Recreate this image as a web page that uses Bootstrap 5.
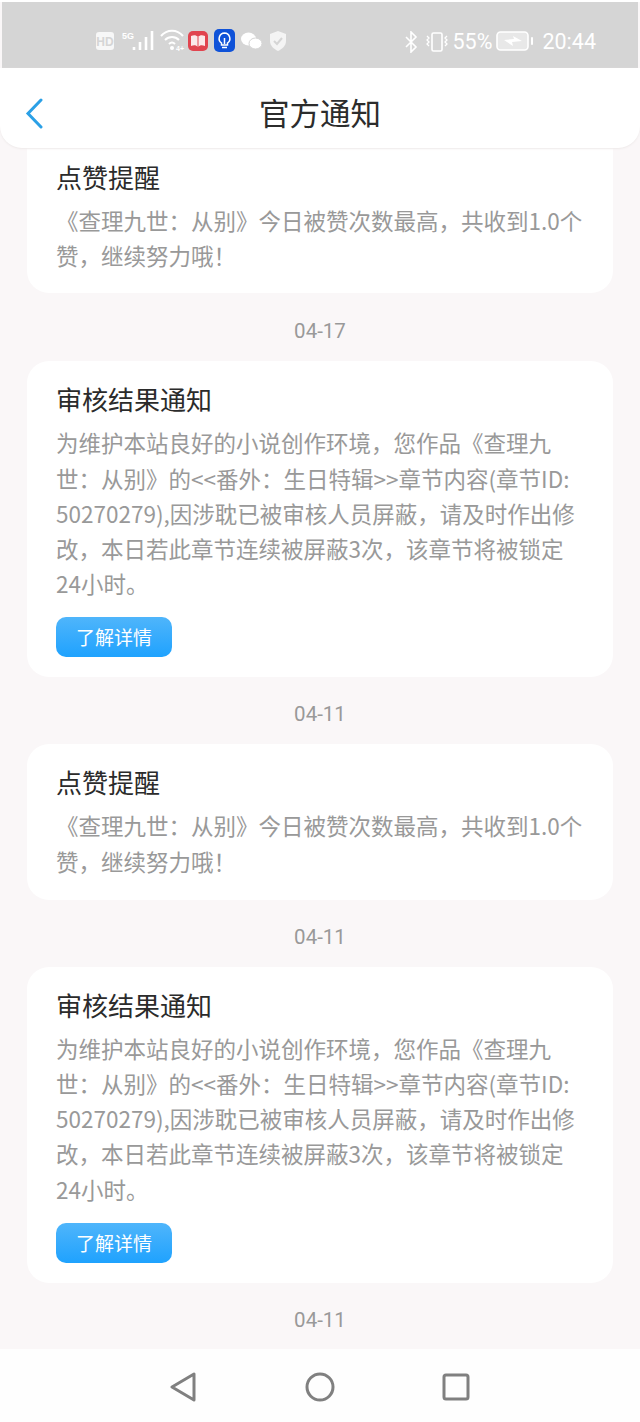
<!DOCTYPE html>
<html lang="zh"><head><meta charset="utf-8">
<link href="https://cdn.jsdelivr.net/npm/bootstrap@5.3.0/dist/css/bootstrap.min.css" rel="stylesheet">
<script src="https://cdn.jsdelivr.net/npm/bootstrap@5.3.0/dist/js/bootstrap.bundle.min.js"></script>
<style>
html,body{margin:0;background:#fff;}
body{font-family:"Noto Sans CJK SC","Noto Sans",sans-serif;}
.phone{width:640px;height:1422px;overflow:hidden;background:#faf7f8;border-top:2px solid #fff;}
.sbar{height:66px;background:#d5d5d5;color:#fff;padding:10px 42px 0 94px;margin:0 2px;}
.sbar svg{display:block;flex:none;}
.stxt{font:400 21.5px/1 "Roboto",sans-serif;color:#fff;margin-top:19px;}
.ic-hd{margin-top:19px;}
.ic-sig{margin:17px 0 0 6px;}
.ic-wifi{margin:15px 0 0 4px;}
.ic-red{margin:19px 0 0 2px;}
.ic-blue{margin:17px 0 0 6px;}
.ic-wx{margin:20px 0 0 6px;}
.ic-sh{margin:19px 0 0 7px;}
.ic-bt{margin-top:19px;}
.ic-vib{margin:20px 0 0 7px;}
.pct{margin-left:4px;}
.ic-bat{margin:19px 0 0 4px;}
.clock{margin-left:8px;}
.hdr{height:80px;background:#fff;border-radius:0 0 22px 22px;box-shadow:0 1px 2px #eeeaea;z-index:2;margin-bottom:-5px;padding-top:8px;}
.hdr-title{font-size:30.5px;line-height:1;color:#2c2c2c;}
.back{position:absolute;left:25px;top:30px;}
.feed{padding:0 27px;flex:1 1 auto;min-height:0;overflow:hidden;}
.ncard{background:#fff;border-radius:22px;padding:20px 29px 21px;}
.ncard.first{padding-top:16px;padding-bottom:20px;margin-bottom:1px;border-radius:0 0 22px 22px;}
.ntitle{font-size:26px;line-height:36px;color:#2b2b2b;margin-bottom:8px;}
.nbody{font-size:22.5px;line-height:35.2px;color:#999;margin:0;word-break:break-all;width:534px;}
.ndate{font:20.5px/24px "Roboto","Noto Sans",sans-serif;color:#999;text-align:center;height:67px;padding-top:25px;}
.more{display:block;width:116px;height:40px;margin:16px 0 -1px;padding:0;border:0;border-radius:10px;background:linear-gradient(#4fb5fb,#1fa2fe);color:#fff;font-size:19px;line-height:40px;text-align:center;}
.stub{height:100px;}
.bnav{height:73px;background:#fefefe;z-index:2;}
.bnav svg{display:block;margin-top:2px;}
.nav-o{margin-left:105px;}
.nav-s{margin-left:106px;}
</style></head><body>
<div class="phone d-flex flex-column">
 <div class="sbar d-flex align-items-start flex-shrink-0">
  <svg class="ic-hd" width="20" height="20" viewBox="0 0 20 20"><rect width="18" height="18" y="1" rx="3" fill="#f7f7f7"/><text x="9" y="15" text-anchor="middle" font-family="Liberation Sans" font-size="12" font-weight="700" fill="#d5d5d5">HD</text></svg>
  <svg class="ic-sig" width="34" height="24" viewBox="0 0 34 24"><text x="0" y="10" font-family="Liberation Sans" font-size="9" font-weight="700" fill="#fff">5G</text><path d="M12 21v-3M18 21v-8M24 21v-13M30 21V2" stroke="#fff" stroke-width="2.6" fill="none"/></svg>
  <svg class="ic-wifi" width="26" height="24" viewBox="0 0 26 24"><g fill="none" stroke="#fff" stroke-width="2"><path d="M1 9C7 2 17 2 23 9"/><path d="M5 13c4-4 10-4 14 0"/><path d="M9 17c2-2 4-2 6 0"/></g><circle cx="12" cy="21" r="2" fill="#fff"/><text x="16" y="24" font-family="Liberation Sans" font-size="7" font-weight="700" fill="#fff">4+</text></svg>
  <svg class="ic-red" width="20" height="20" viewBox="0 0 20 20"><rect width="20" height="20" rx="5" fill="#e1444f"/><path d="M3 5c3-1 5-1 7 1 2-2 4-2 7-1v10c-3-1-5-1-7 1-2-2-4-2-7-1z" fill="#fbe9ea"/><path d="M10 6v10" stroke="#e1444f"/></svg>
  <svg class="ic-blue" width="21" height="23" viewBox="0 0 21 23"><rect width="21" height="23" rx="5" fill="#0f52d8"/><path d="M10.500 4a5.500 5.500 0 0 0-3 10v2h6v-2a5.500 5.500 0 0 0-3-10zM8 18.500h5M10.500 9v6" fill="none" stroke="#fff" stroke-width="1.500"/></svg>
  <svg class="ic-wx" width="21" height="18" viewBox="0 0 21 18"><ellipse cx="7.500" cy="7" rx="7.500" ry="6.500" fill="#fff"/><ellipse cx="14.500" cy="11.500" rx="6.500" ry="5.500" fill="#fff" stroke="#d5d5d5"/></svg>
  <svg class="ic-sh" width="18" height="20" viewBox="0 0 18 20"><path d="M9 0l8 3v7c0 5-4 8-8 10-4-2-8-5-8-10V3z" fill="#f4f4f4"/><path d="M5 10l3 3 5-6" fill="none" stroke="#d5d5d5" stroke-width="2"/></svg>
  <div class="ms-auto d-flex align-items-start">
   <svg class="ic-bt" width="14" height="22" viewBox="0 0 14 22"><path d="M2 6l10 10-5 5V1l5 5L2 16" fill="none" stroke="#fff" stroke-width="1.600"/></svg>
   <svg class="ic-vib" width="24" height="20" viewBox="0 0 24 20"><rect x="7" y="1" width="10" height="18" rx="1.500" fill="none" stroke="#fff" stroke-width="1.600"/><path d="M2 4l2 2-2 2 2 2-2 2 2 2M22 4l-2 2 2 2-2 2 2 2-2 2" fill="none" stroke="#fff" stroke-width="1.300"/></svg>
   <span class="stxt pct">55%</span>
   <svg class="ic-bat" width="38" height="20" viewBox="0 0 38 20"><rect x="1" y="1" width="31" height="18" rx="3.500" fill="#e8e8e8" stroke="#fff" stroke-width="1.600"/><rect x="35" y="6" width="2" height="8" rx="1" fill="#fff"/><path d="M8 9l10-1-1-3 9 5-10 1 1 4z" fill="#fff"/></svg>
   <span class="stxt clock">20:44</span>
  </div>
 </div>
 <div class="hdr position-relative d-flex align-items-center justify-content-center flex-shrink-0">
  <svg class="back" width="20" height="31" viewBox="0 0 20 31"><path d="M16 2L3 15.500 16 29" fill="none" stroke="#2ba0e6" stroke-width="3" stroke-linecap="round"/></svg>
  <div class="hdr-title">官方通知</div>
 </div>
 <div class="feed">
  <div class="ncard first">
   <div class="ntitle">点赞提醒</div>
   <p class="nbody">《查理九世：从别》今日被赞次数最高，共收到1.0个赞，继续努力哦！</p>
  </div>
  <div class="ndate">04-17</div>
  <div class="ncard">
   <div class="ntitle">审核结果通知</div>
   <p class="nbody">为维护本站良好的小说创作环境，您作品《查理九世：从别》的&lt;&lt;番外：生日特辑&gt;&gt;章节内容(章节ID:<br>50270279),因涉耽已被审核人员屏蔽，请及时作出修改，本日若此章节连续被屏蔽3次，该章节将被锁定<br>24小时。</p>
   <button class="more" type="button">了解详情</button>
  </div>
  <div class="ndate">04-11</div>
  <div class="ncard">
   <div class="ntitle">点赞提醒</div>
   <p class="nbody">《查理九世：从别》今日被赞次数最高，共收到1.0个赞，继续努力哦！</p>
  </div>
  <div class="ndate">04-11</div>
  <div class="ncard">
   <div class="ntitle">审核结果通知</div>
   <p class="nbody">为维护本站良好的小说创作环境，您作品《查理九世：从别》的&lt;&lt;番外：生日特辑&gt;&gt;章节内容(章节ID:<br>50270279),因涉耽已被审核人员屏蔽，请及时作出修改，本日若此章节连续被屏蔽3次，该章节将被锁定<br>24小时。</p>
   <button class="more" type="button">了解详情</button>
  </div>
  <div class="ndate">04-11</div>
  <div class="ncard stub"></div>
 </div>
 <div class="bnav d-flex flex-shrink-0 justify-content-center align-items-center">
  <svg width="30" height="32" viewBox="0 0 30 32"><path d="M24 3v26L2 16z" fill="none" stroke="#808080" stroke-width="3" stroke-linejoin="round"/></svg>
  <svg class="nav-o" width="30" height="32" viewBox="0 0 30 32"><ellipse cx="15" cy="16" rx="13" ry="13" fill="none" stroke="#808080" stroke-width="3"/></svg>
  <svg class="nav-s" width="30" height="32" viewBox="0 0 30 32"><rect x="3" y="4" width="24" height="24" rx="2" fill="none" stroke="#808080" stroke-width="3"/></svg>
 </div>
</div>
</body></html>
